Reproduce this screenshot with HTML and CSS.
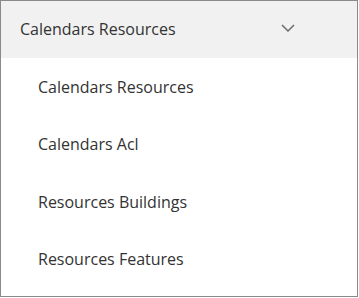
FILE: index.html
```html
<!DOCTYPE html>
<html>
<head>
    <title>Calendars Menu</title>
    <meta name="viewport" content="width=device-width, initial-scale=1">
    <link rel="stylesheet" href="styles.css">
</head>
<body>
    <div class="panel">
        <button class="group-head">
            <span>Calendars Resources</span>
            <svg class="chev" width="14" height="8" viewBox="0 0 14 8"><path d="M1 1 L7 7 L13 1" fill="none" stroke="#6b6b6b" stroke-width="1.5"/></svg>
        </button>
        <div class="group-items">
            <div class="item">Calendars Resources</div>
            <div class="item">Calendars Acl</div>
            <div class="item">Resources Buildings</div>
            <div class="item">Resources Features</div>
        </div>
    </div>
</body>
</html>
```

FILE: styles.css
```css
body { margin: 0; font-family: "Open Sans", "Noto Sans", sans-serif; background: #fff; }
.panel { width: 358px; height: 297px; box-sizing: border-box; border: 1px solid #8a8a8a; background: white; }

.group-head { width: 100%; height: 57px; border: none; background: #f1f1f1; display: flex; justify-content: space-between; align-items: center; padding: 0 62px 1px 19px; font: inherit; font-size: 16px; color: #333; text-align: left; cursor: pointer; }
.chev { display: block; margin-top: -3px; }

.group-items { display: flex; flex-direction: column; }
.item { height: 57.5px; display: flex; align-items: center; padding-left: 37px; font-size: 16px; color: #333; }
```
